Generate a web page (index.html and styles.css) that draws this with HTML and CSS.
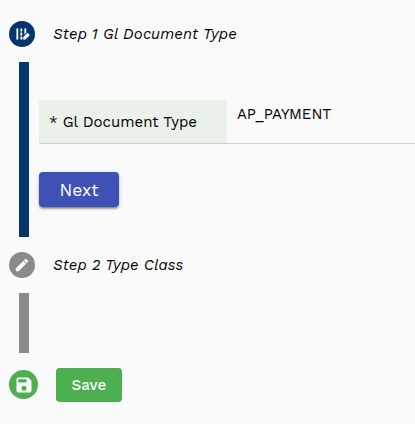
FILE: index.html
```html
<!DOCTYPE html>
<html lang="en">
<head>
<meta charset="utf-8">
<title>Gl Document</title>
<link rel="stylesheet" href="styles.css">
</head>
<body>
<main class="stepper">
  <header class="step">
    <span class="badge badge-active"><svg class="icon-road" viewBox="0 0 24 24"><path d="M18 4h-2v7.900l2-2zM4 4h2v16H4zM10 4h2v4h-2zM10 10h2v4h-2zM10 16h2v4h-2zM22.560 12.590l-1.150-1.150c-.59-.59-1.540-.59-2.120 0L14 16.730V20h3.270l5.290-5.290c.59-.59.59-1.540 0-2.120z"/></svg></span>
    <h2 class="title title-first">Step 1 Gl Document Type</h2>
  </header>
  <section class="content content-active">
    <div class="field">
      <div class="label">* Gl Document Type</div>
      <div class="value">AP_PAYMENT</div>
    </div>
    <button class="next">Next</button>
  </section>
  <header class="step">
    <span class="badge"><svg class="icon-edit" viewBox="0 0 24 24"><path d="M3 17.250V21h3.750L17.810 9.940l-3.750-3.750L3 17.250zM20.710 7.040a1 1 0 0 0 0-1.410l-2.340-2.340a1 1 0 0 0-1.410 0l-1.830 1.830 3.750 3.750 1.830-1.830z"/></svg></span>
    <h2 class="title title-second">Step 2 Type Class</h2>
  </header>
  <section class="content content-idle"></section>
  <footer class="actions">
    <span class="badge badge-save"><svg class="icon-save" viewBox="0 0 24 24"><path d="M17 3H5a2 2 0 0 0-2 2v14a2 2 0 0 0 2 2h14a2 2 0 0 0 2-2V7l-4-4zm-5 16a3 3 0 1 1 0-6 3 3 0 0 1 0 6zm3-10H5V5h10v4z"/></svg></span>
    <button class="save">Save</button>
  </footer>
</main>
</body>
</html>
```
FILE: styles.css
```css
* { box-sizing: border-box; }
body {
  margin: 0;
  height: 424px;
  overflow: hidden;
  background: #fafafa;
  color: #000;
  font-family: "Work Sans", Inter, "Liberation Sans", sans-serif;
  font-weight: 400;
}
.stepper { padding: 21px 0 0 9px; }
.step { display: flex; align-items: center; height: 26px; }
.badge {
  display: flex;
  flex: none;
  align-items: center;
  justify-content: center;
  width: 26px;
  height: 26px;
  border-radius: 50%;
  background: #8b8b8b;
}
.badge-active { background: #03366c; }
.badge svg { fill: #fff; }
.icon-road, .icon-edit { width: 16px; height: 16px; stroke: #fff; stroke-width: 0.7; }
.title {
  margin: 0 0 0 18px;
  font-size: 15px;
  line-height: 20px;
  font-weight: 400;
  font-style: italic;
  white-space: nowrap;
}
.title-first { letter-spacing: 0.15px; }
.title-second { letter-spacing: 0.08px; }
.content { margin: 15px 0 15px 10px; border-left: 10px solid #8b8b8b; }
.content-active {
  height: 175px;
  padding: 38px 0 0 10px;
  border-color: #03366c;
}
.content-idle { height: 60px; }
.field { display: flex; height: 44px; border-bottom: 1px solid #c9d5d0; }
.label {
  width: 188px;
  padding: 12px 0 0 10px;
  background: #e9f1e9;
  font-size: 15px;
  line-height: 20px;
  white-space: nowrap;
}
.value { padding: 4px 0 0 10px; font-size: 15px; line-height: 21px; letter-spacing: -0.05px; }
button { display: block; border: 0; padding: 0; color: #fff; font-family: inherit; }
.next {
  width: 80px;
  height: 35px;
  margin-top: 27.5px;
  border-radius: 4px;
  background: #3f51b5;
  box-shadow: 0 3px 1px -2px #0003, 0 2px 2px #0024, 0 1px 5px #0000001f;
  font-size: 17.5px;
  font-weight: 400;
  line-height: 37px;
}
.actions { display: flex; align-items: center; height: 34px; margin-top: -0.5px; }
.badge-save { width: 29px; height: 29px; background: #4caf50; }
.icon-save { width: 20px; height: 20px; }
.save {
  width: 66px;
  height: 34px;
  margin-left: 18px;
  border-radius: 4px;
  background: #4caf50;
  font-size: 15.2px;
  font-weight: 500;
  line-height: 34px;
}
```
